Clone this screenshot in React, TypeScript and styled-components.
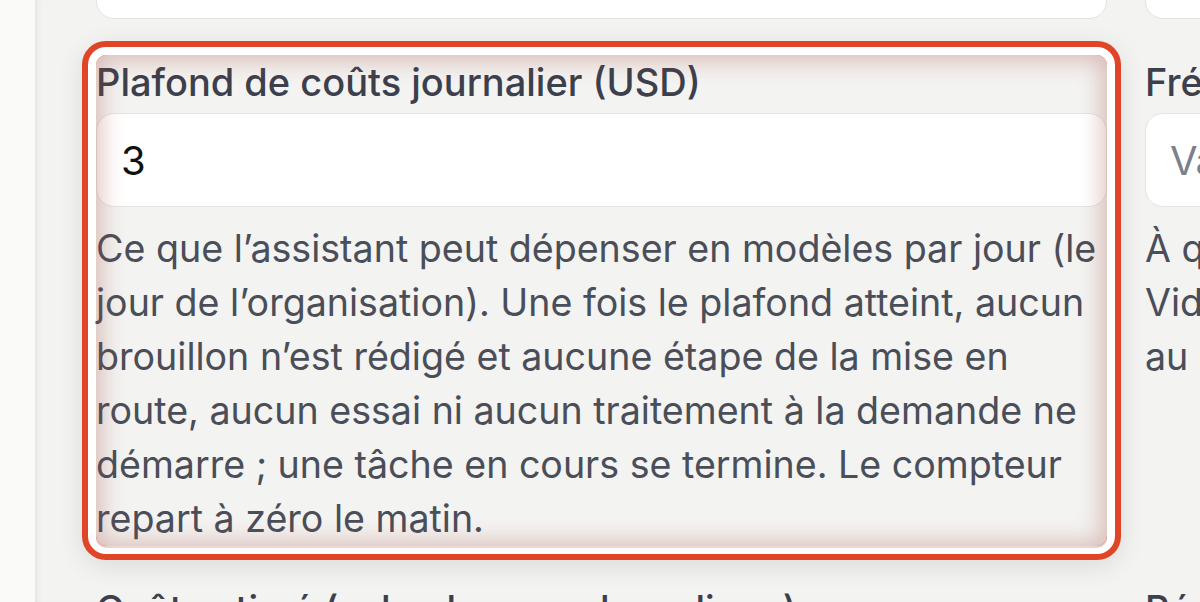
import React from "react";
import styled, { createGlobalStyle, css } from "styled-components";

const Global = createGlobalStyle`
  html, body { margin: 0; padding: 0; height: 100%; overflow: hidden; }
  body { background: #f9f9f8; font-family: Inter, "Noto Sans", sans-serif; }
  #root { height: 100%; }
`;

const Shell = styled.div`
  display: flex;
  height: 602px;
  overflow: hidden;
`;

const SideEdge = styled.div`
  flex: 0 0 35px;
  background: #fafaf9;
`;

const Main = styled.main`
  flex: 1;
  min-width: 0;
  background: #f3f3f1;
  box-shadow: inset 6px 0 10px -8px rgba(0, 0, 0, 0.18);
  padding-left: 61px;
  overflow: hidden;
`;

const Grid = styled.div`
  display: grid;
  grid-template-columns: 1011px 1011px;
  column-gap: 38px;
  row-gap: 36px;
  margin-top: -133px;
`;

const Field = styled.div<{ $highlighted?: boolean }>`
  display: flex;
  flex-direction: column;
  position: relative;
  border-radius: 10px;
  ${(p) =>
    p.$highlighted &&
    css`
      box-shadow: 0 0 0 8px #ffffff, 0 0 0 14px #df4526,
        0 6px 26px 14px rgba(0, 0, 0, 0.1);
      &::after {
        content: "";
        position: absolute;
        inset: 0 0 -2px 0;
        border-radius: 10px;
        pointer-events: none;
        box-shadow: inset 0 0 22px 6px rgba(165, 75, 65, 0.32);
      }
    `}
`;

const Label = styled.label`
  font-size: 38px;
  font-weight: 500;
  line-height: 54px;
  color: #3c404c;
  white-space: nowrap;
  margin-bottom: 4px;
`;

const Input = styled.div<{ $placeholder?: boolean }>`
  box-sizing: border-box;
  height: 94px;
  display: flex;
  align-items: center;
  padding: 0 24px;
  background: #ffffff;
  border: 1.5px solid #e3e3e1;
  border-radius: 18px;
  font-size: 40px;
  color: ${(p) => (p.$placeholder ? "#7b808a" : "#111111")};
  white-space: nowrap;
  overflow: hidden;
`;

const Help = styled.p`
  margin: 15px 0 0;
  font-size: 37.6px;
  line-height: 54px;
  color: #4a4e58;
`;

export default function App() {
  return (
    <>
      <Global />
      <Shell>
        <SideEdge />
        <Main>
          <Grid>
            <Field>
              <Label>Nombre maximal de brouillons par jour</Label>
              <Input>10</Input>
            </Field>
            <Field>
              <Label>Fuseau horaire de l’organisation</Label>
              <Input>Europe/Paris</Input>
            </Field>

            <Field $highlighted>
              <Label>Plafond de coûts journalier (USD)</Label>
              <Input>3</Input>
              <Help>
                Ce que l’assistant peut dépenser en modèles par jour (le jour de
                l’organisation). Une fois le plafond atteint, aucun brouillon
                n’est rédigé et aucune étape de la mise en route, aucun essai ni
                aucun traitement à la demande ne démarre ; une tâche en cours se
                termine. Le compteur repart à zéro le matin.
              </Help>
            </Field>
            <Field>
              <Label>Fréquence des essais automatiques</Label>
              <Input $placeholder>Valeur par défaut</Input>
              <Help>
                À quelle fréquence l’assistant relance un essai échoué. Vide =
                valeur par défaut de la plateforme, soit une fois
                {" au\u00a0maximum par jour."}
              </Help>
            </Field>

            <Field>
              <Label>Coût estimé (selon les appels en ligne)</Label>
              <Input>0,42</Input>
            </Field>
            <Field>
              <Label>Période de facturation</Label>
              <Input>Mensuelle</Input>
            </Field>
          </Grid>
        </Main>
      </Shell>
    </>
  );
}
